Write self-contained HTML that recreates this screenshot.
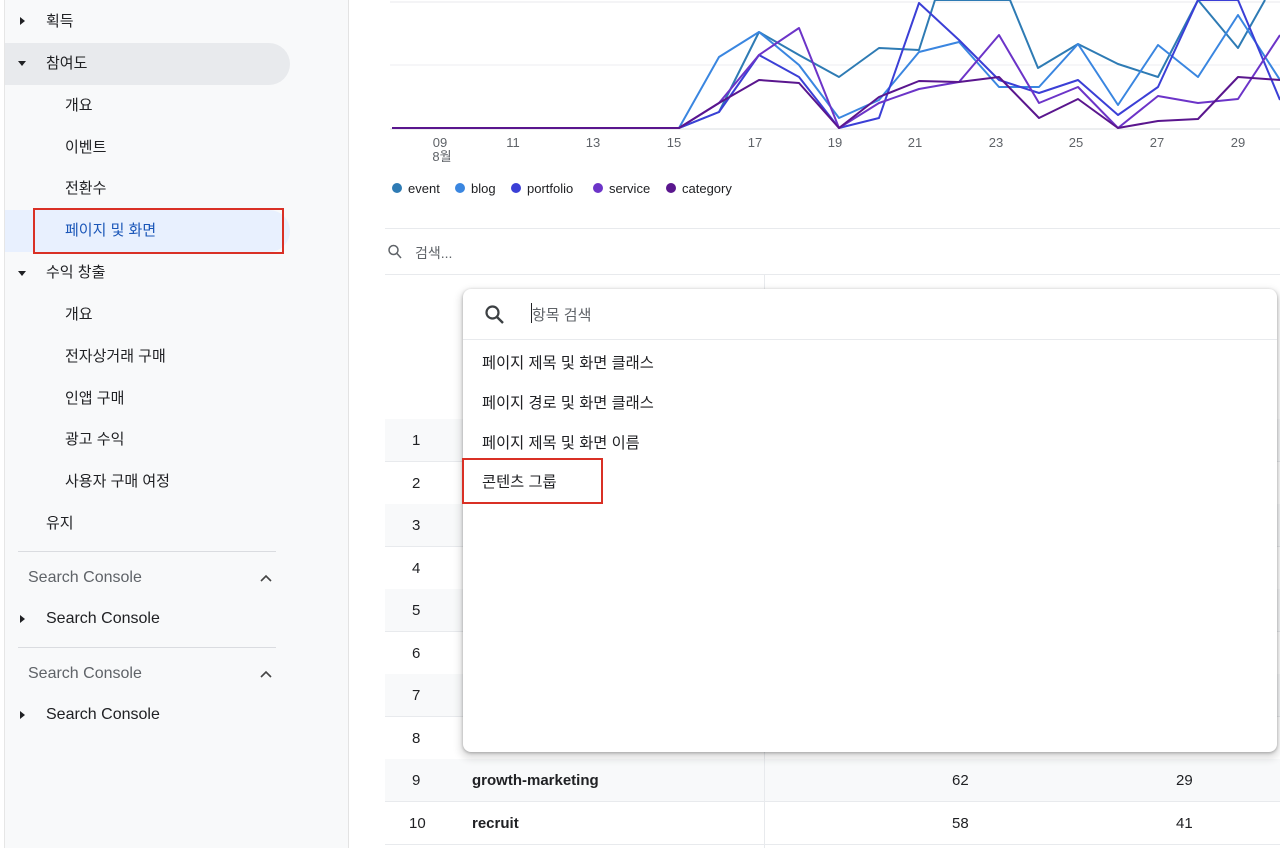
<!DOCTYPE html>
<html><head><meta charset="utf-8">
<style>
*{margin:0;padding:0;box-sizing:border-box}
body{width:1280px;height:848px;overflow:hidden;background:#fff;font-family:"Liberation Sans","Noto Sans CJK KR",sans-serif;color:#202124;position:relative}
.abs{position:absolute}
#side{left:0;top:0;width:349px;height:848px;background:#f8f9fa;border-right:1px solid #e3e3e3}
#side .strip{left:0;top:0;width:5px;height:848px;background:#fff;border-right:1px solid #e6e6e6}
.it{position:absolute;font-size:15px;line-height:20px;white-space:nowrap}
.sc{font-size:16px}
.tri{position:absolute;width:0;height:0}
.tr{border-top:4px solid transparent;border-bottom:4px solid transparent;border-left:5px solid #202124}
.td{border-left:4px solid transparent;border-right:4px solid transparent;border-top:5px solid #202124}
.hr{position:absolute;left:18px;width:258px;height:1px;background:#dadce0}
.row{position:absolute;left:385px;width:895px;height:43px;border-bottom:1px solid #e8eaed;font-size:15px}
.row span{position:absolute;top:13px}
.dd{font-size:15.3px;position:absolute;left:482px}
</style></head><body>
<div id="side" class="abs">
 <div class="abs strip"></div>
 <div class="abs" style="left:5px;top:43px;width:285px;height:42px;background:#e8eaed;border-radius:0 21px 21px 0"></div>
 <div class="abs" style="left:5px;top:210px;width:285px;height:42px;background:#e8f0fe;border-radius:0 21px 21px 0"></div>
 <div class="abs" style="left:33px;top:208px;width:251px;height:46px;border:2px solid #d93025"></div>
 <div class="tri tr" style="left:20px;top:17px"></div><div class="it" style="left:46px;top:12px">획득</div>
 <div class="tri td" style="left:18px;top:61px"></div><div class="it" style="left:46px;top:54px">참여도</div>
 <div class="it" style="left:65px;top:96px">개요</div>
 <div class="it" style="left:65px;top:138px">이벤트</div>
 <div class="it" style="left:65px;top:179px">전환수</div>
 <div class="it" style="left:65px;top:221px;color:#1a56b8">페이지 및 화면</div>
 <div class="tri td" style="left:18px;top:271px"></div><div class="it" style="left:46px;top:263px">수익 창출</div>
 <div class="it" style="left:65px;top:305px">개요</div>
 <div class="it" style="left:65px;top:347px">전자상거래 구매</div>
 <div class="it" style="left:65px;top:389px">인앱 구매</div>
 <div class="it" style="left:65px;top:430px">광고 수익</div>
 <div class="it" style="left:65px;top:472px">사용자 구매 여정</div>
 <div class="it" style="left:46px;top:514px">유지</div>
 <div class="hr" style="top:551px"></div>
 <div class="it sc" style="left:28px;top:568px;color:#5f6368">Search Console</div>
 <svg class="abs" style="left:259px;top:573px" width="14" height="10"><path d="M2 8 L7 3 L12 8" stroke="#444" stroke-width="1.6" fill="none"/></svg>
 <div class="tri tr" style="left:20px;top:615px"></div><div class="it sc" style="left:46px;top:609px">Search Console</div>
 <div class="hr" style="top:647px"></div>
 <div class="it sc" style="left:28px;top:664px;color:#5f6368">Search Console</div>
 <svg class="abs" style="left:259px;top:669px" width="14" height="10"><path d="M2 8 L7 3 L12 8" stroke="#444" stroke-width="1.6" fill="none"/></svg>
 <div class="tri tr" style="left:20px;top:711px"></div><div class="it sc" style="left:46px;top:705px">Search Console</div>
</div>

<svg class="abs" style="left:0;top:0" width="1280" height="200">
 <line x1="390" y1="2" x2="1280" y2="2" stroke="#e8eaed"/>
 <line x1="390" y1="65" x2="1280" y2="65" stroke="#eceef0"/>
 <line x1="390" y1="129" x2="1280" y2="129" stroke="#dadce0"/>
 <g fill="none" stroke-width="2" stroke-linejoin="round">
 <polyline stroke="#2e7bb4" points="392,128 679,128 719,112 759,32 799,55 839,77 879,48 919,50 935,0 1010,0 1038,68 1078,44 1118,64 1158,77 1198,0 1238,48 1265,0"/>
 <polyline stroke="#3a86e0" points="392,128 679,128 719,57 759,32 799,65 839,118 879,100 919,52 959,42 999,87 1039,87 1078,44 1118,105 1158,45 1198,77 1238,15 1280,80"/>
 <polyline stroke="#3b3fd6" points="392,128 679,128 719,112 759,55 799,77 839,128 879,118 919,3 959,40 999,80 1039,93 1078,80 1118,115 1158,87 1198,0 1238,0 1280,100"/>
 <polyline stroke="#6c34c8" points="392,128 679,128 719,103 759,55 799,28 839,128 879,103 919,89 959,82 999,35 1039,103 1078,87 1118,128 1158,96 1198,103 1238,99 1280,35"/>
 <polyline stroke="#5a168e" points="392,128 679,128 719,103 759,80 799,83 839,128 879,97 919,81 959,82 999,77 1039,118 1078,99 1118,128 1158,121 1198,119 1238,77 1280,80"/>
 </g>
 <g font-family="Liberation Sans" font-size="13" fill="#5f6368" text-anchor="middle">
 <text x="440" y="147">09</text><text x="513" y="147">11</text><text x="593" y="147">13</text><text x="674" y="147">15</text><text x="755" y="147">17</text><text x="835" y="147">19</text><text x="915" y="147">21</text><text x="996" y="147">23</text><text x="1076" y="147">25</text><text x="1157" y="147">27</text><text x="1238" y="147">29</text>
 <text x="442" y="161" font-family="Liberation Sans, Noto Sans CJK KR">8월</text>
 </g>
 <g font-family="Liberation Sans" font-size="13" fill="#202124">
 <circle cx="397" cy="188" r="5" fill="#2e7bb4"/><text x="408" y="193">event</text>
 <circle cx="460" cy="188" r="5" fill="#3a86e0"/><text x="471" y="193">blog</text>
 <circle cx="516" cy="188" r="5" fill="#3b3fd6"/><text x="527" y="193">portfolio</text>
 <circle cx="598" cy="188" r="5" fill="#6c34c8"/><text x="609" y="193">service</text>
 <circle cx="671" cy="188" r="5" fill="#5a168e"/><text x="682" y="193">category</text>
 </g>
</svg>

<div class="abs" style="left:385px;top:228px;width:895px;height:1px;background:#e8eaed"></div>
<svg class="abs" style="left:387px;top:243px" width="16" height="18"><circle cx="6.5" cy="7" r="4.5" stroke="#5f6368" stroke-width="1.5" fill="none"/><line x1="10" y1="10.5" x2="14" y2="15" stroke="#5f6368" stroke-width="1.5"/></svg>
<div class="abs" style="left:415px;top:243px;font-size:14px;color:#5f6368">검색...</div>
<div class="abs" style="left:385px;top:274px;width:895px;height:1px;background:#e8eaed"></div>
<div class="abs" style="left:764px;top:275px;width:1px;height:573px;background:#e8eaed"></div>

<div class="row" style="top:419px;background:#f8f9fa"><span style="left:27px">1</span></div>
<div class="row" style="top:462px"><span style="left:27px">2</span></div>
<div class="row" style="top:504px;background:#f8f9fa"><span style="left:27px">3</span></div>
<div class="row" style="top:547px"><span style="left:27px">4</span></div>
<div class="row" style="top:589px;background:#f8f9fa"><span style="left:27px">5</span></div>
<div class="row" style="top:632px"><span style="left:27px">6</span></div>
<div class="row" style="top:674px;background:#f8f9fa"><span style="left:27px">7</span></div>
<div class="row" style="top:717px"><span style="left:27px">8</span></div>
<div class="row" style="top:759px;background:#f8f9fa"><span style="left:27px">9</span><span style="left:87px;font-weight:bold">growth-marketing</span><span style="left:567px">62</span><span style="left:791px">29</span></div>
<div class="row" style="top:802px"><span style="left:24px">10</span><span style="left:87px;font-weight:bold">recruit</span><span style="left:567px">58</span><span style="left:791px">41</span></div>
<div class="abs" style="left:764px;top:759px;width:1px;height:89px;background:#e8eaed"></div>

<div class="abs" style="left:463px;top:289px;width:814px;height:463px;background:#fff;border-radius:8px;box-shadow:0 1px 3px rgba(0,0,0,.3),0 4px 8px 3px rgba(0,0,0,.12)">
 <svg class="abs" style="left:20px;top:14px" width="24" height="24"><circle cx="9.5" cy="9.5" r="6" stroke="#3c4043" stroke-width="2.2" fill="none"/><line x1="14" y1="14" x2="20" y2="20" stroke="#3c4043" stroke-width="2.4"/></svg>
 <div class="abs" style="left:68px;top:14px;width:1px;height:20px;background:#202124"></div>
 <div class="abs" style="left:69px;top:15px;font-size:15px;color:#5f6368">항목 검색</div>
 <div class="abs" style="left:0;top:50px;width:814px;height:1px;background:#e8eaed"></div>
</div>
<div class="dd" style="top:351px">페이지 제목 및 화면 클래스</div>
<div class="dd" style="top:391px">페이지 경로 및 화면 클래스</div>
<div class="dd" style="top:431px">페이지 제목 및 화면 이름</div>
<div class="dd" style="top:470px">콘텐츠 그룹</div>
<div class="abs" style="left:462px;top:458px;width:141px;height:46px;border:2px solid #d93025"></div>
</body></html>
